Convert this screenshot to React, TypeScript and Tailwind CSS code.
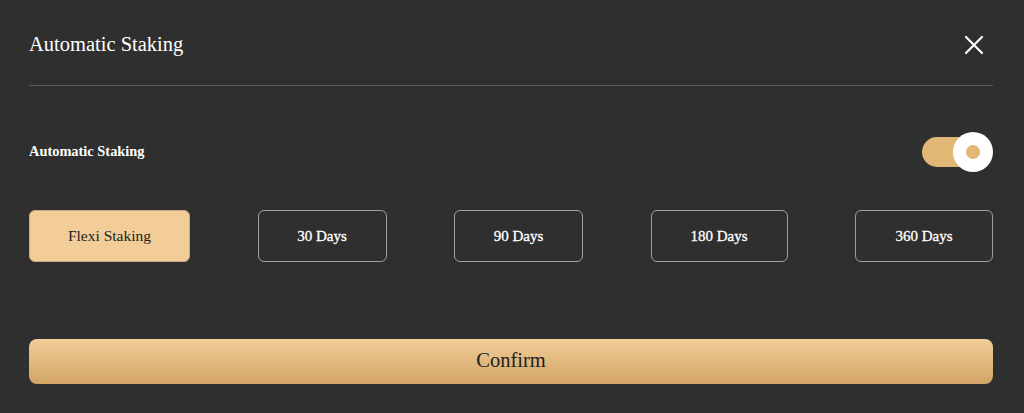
import React from "react";

export default function App() {
  const serif = { fontFamily: '"Liberation Serif", "Times New Roman", serif' };
  const days = [
    { label: "30 Days", w: "w-[129px]" },
    { label: "90 Days", w: "w-[129px]" },
    { label: "180 Days", w: "w-[137px]" },
    { label: "360 Days", w: "w-[138px]" },
  ];
  return (
    <div
      className="w-[1024px] h-[413px] bg-[#2f2f2f] pl-[29px] pr-[31px] pt-[30px]"
      style={serif}
    >
      <div className="flex items-center justify-between h-[28px]">
        <h2 className="text-[20.5px] text-white leading-none">Automatic Staking</h2>
        <button className="mr-[9px] mt-[2px] text-white">
          <svg width="20" height="20" viewBox="0 0 20 20" fill="none">
            <path d="M2 2L18 18M18 2L2 18" stroke="white" strokeWidth="2.2" strokeLinecap="round" />
          </svg>
        </button>
      </div>
      <div className="mt-[27px] h-px bg-[#5c5c60]" />
      <div className="mt-[46px] flex items-center justify-between h-[40px]">
        <span className="text-[14.4px] font-bold text-white">Automatic Staking</span>
        <div className="relative w-[71px] h-[40px] flex items-center">
          <div className="w-[60px] h-[30px] rounded-full bg-[#e0b775]" />
          <div className="absolute right-0 top-0 w-[40px] h-[40px] rounded-full bg-white flex items-center justify-center">
            <div className="w-[14px] h-[14px] rounded-full bg-[#e0b775]" />
          </div>
        </div>
      </div>
      <div className="mt-[38px] flex items-center justify-between">
        <button className="w-[161px] h-[52px] rounded-[6px] bg-[#f2cd98] border border-[#c9aa80] text-[15.5px] text-[#222]">
          Flexi Staking
        </button>
        {days.map((d) => (
          <button
            key={d.label}
            className={`${d.w} h-[52px] rounded-[6px] border border-[#a0a0a0] text-[15px] text-white [-webkit-text-stroke:0.3px_white]`}
          >
            {d.label}
          </button>
        ))}
      </div>
      <button className="mt-[77px] w-full h-[45px] pb-[3px] rounded-[8px] bg-gradient-to-b from-[#f1cd98] to-[#d2a465] text-[20.5px] text-[#1e1e1e]">
        Confirm
      </button>
    </div>
  );
}
